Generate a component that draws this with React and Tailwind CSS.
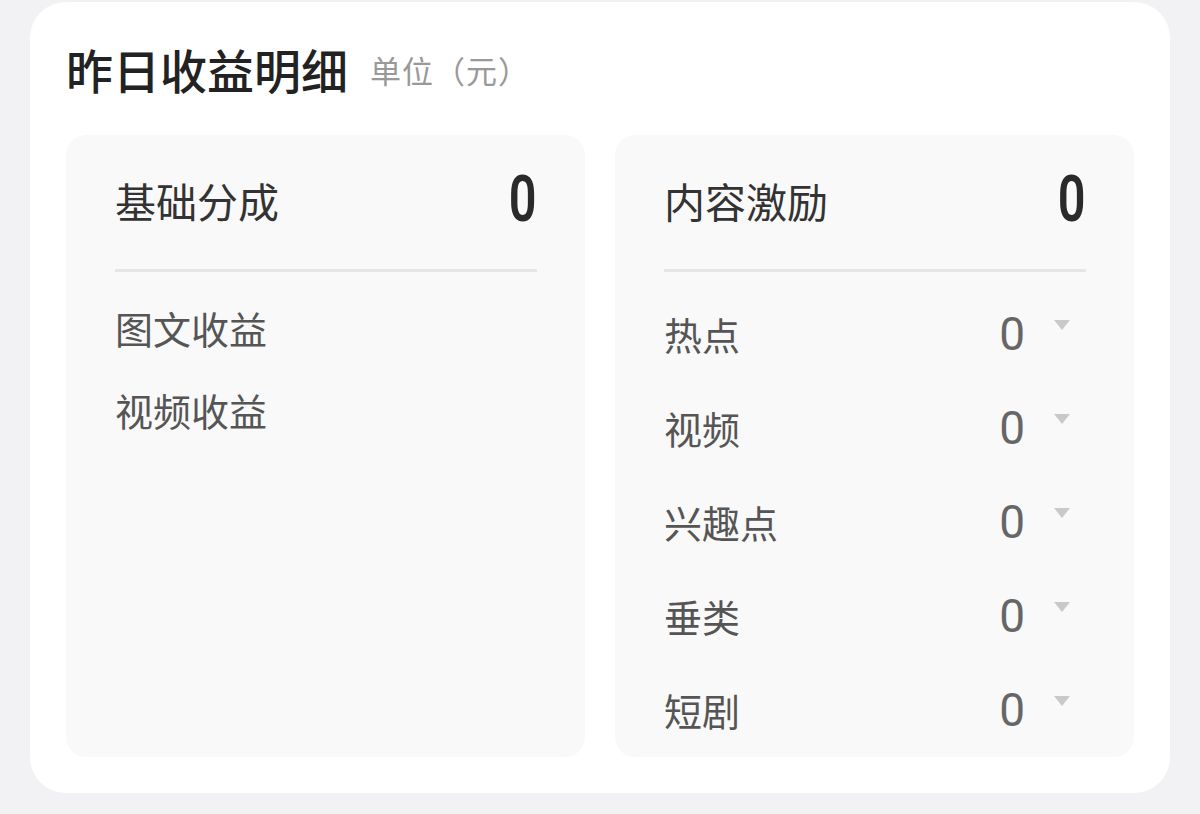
import React from "react";

const cjk = { fontFamily: '"Noto Sans CJK SC", "Noto Sans", sans-serif' };
const num = { fontFamily: 'Roboto, "Liberation Sans", sans-serif' };

const basicItems = ["图文收益", "视频收益"];
const incentiveItems = ["热点", "视频", "兴趣点", "垂类", "短剧"];

function Caret() {
  return (
    <svg width="16" height="10" viewBox="0 0 16 10" className="mt-[-18px]">
      <polygon points="0,0 16,0 8,10" fill="#c9c9c9" />
    </svg>
  );
}

function PanelHeader({ title }) {
  return (
    <>
      <div className="flex items-center justify-between h-[52px] mt-[39px]">
        <span className="text-[41px] leading-none text-[#333]" style={cjk}>{title}</span>
        <span
          className="text-[64px] leading-none font-semibold text-[#2a2a2a] origin-right scale-x-[0.76]"
          style={num}
        >
          0
        </span>
      </div>
      <div className="h-[3px] bg-[#e6e6e6] mt-[43px]" />
    </>
  );
}

export default function App() {
  return (
    <div className="w-[1200px] h-[814px] bg-[#f2f2f4] pl-[30px] pt-[2px] overflow-hidden">
      <div className="w-[1140px] h-[791px] bg-white rounded-[36px] px-[36px] pt-[42px]">
        <div className="flex items-center h-[48px] gap-[22px]" style={cjk}>
          <span className="text-[47px] leading-none font-medium text-[#222]">昨日收益明细</span>
          <span className="text-[31px] leading-none text-[#999] mt-[2px] tracking-[1px]">单位（元）</span>
        </div>
        <div className="grid grid-cols-2 gap-[30px] mt-[43px]">
          <div className="h-[622px] bg-[#f9f9f9] rounded-[20px] pl-[49px] pr-[48px]">
            <PanelHeader title="基础分成" />
            <div className="flex flex-col gap-[38px] mt-[33px]">
              {basicItems.map((t) => (
                <div key={t} className="h-[44px] flex items-center text-[38px] text-[#555]" style={cjk}>
                  {t}
                </div>
              ))}
            </div>
          </div>
          <div className="h-[622px] bg-[#f9f9f9] rounded-[20px] pl-[49px] pr-[48px]">
            <PanelHeader title="内容激励" />
            <div className="flex flex-col gap-[50px] mt-[40px]">
              {incentiveItems.map((t) => (
                <div key={t} className="h-[44px] flex items-center justify-between">
                  <span className="text-[38px] leading-none text-[#555]" style={cjk}>{t}</span>
                  <div className="flex items-center gap-[29px] pr-[16px]">
                    <span className="text-[46px] leading-none text-[#666]" style={num}>0</span>
                    <Caret />
                  </div>
                </div>
              ))}
            </div>
          </div>
        </div>
      </div>
    </div>
  );
}
